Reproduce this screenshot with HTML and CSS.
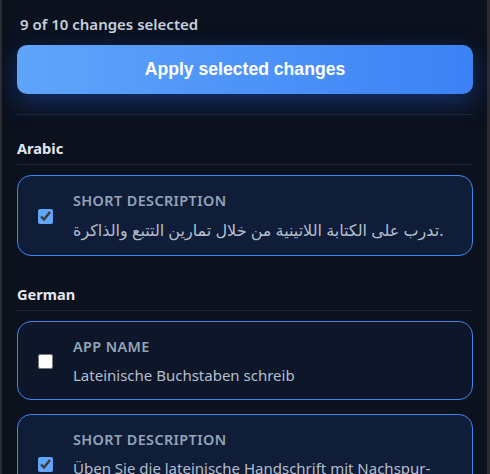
FILE: index.html
```html
<!DOCTYPE html>
<html>
<head>
<meta charset="utf-8">
<link rel="stylesheet" href="styles.css">
</head>
<body>
<div class="panel">
  <div class="count">9 of 10 changes selected</div>
  <button class="apply">Apply selected changes</button>
  <div class="divider"></div>

  <section class="group">
    <h3 class="lang">Arabic</h3>
    <label class="card checked">
      <input type="checkbox" class="check" checked>
      <div class="body">
        <div class="field">Short description</div>
        <div class="value arabic">تدرب على الكتابة اللاتينية من خلال تمارين التتبع والذاكرة.</div>
      </div>
    </label>
  </section>

  <section class="group">
    <h3 class="lang">German</h3>
    <label class="card">
      <input type="checkbox" class="check">
      <div class="body">
        <div class="field">App name</div>
        <div class="value">Lateinische Buchstaben schreib</div>
      </div>
    </label>
    <label class="card checked">
      <input type="checkbox" class="check" checked>
      <div class="body">
        <div class="field">Short description</div>
        <div class="value">Üben Sie die lateinische Handschrift mit Nachspur- und Gedächtnisübungen.</div>
      </div>
    </label>
  </section>
</div>
</body>
</html>
```
FILE: styles.css
```css
html, body {
  margin: 0;
  padding: 0;
  background: #2c2c2e;
  height: 474px;
  overflow: hidden;
}

.panel {
  margin-left: 2px;
  width: 485px;
  box-sizing: border-box;
  padding: 14px 14px 40px 15px;
  background: #0b111d;
  border-radius: 0 0 16px 16px;
  font-family: "Noto Sans", "Open Sans", "DejaVu Sans", sans-serif;
  min-height: 520px;
}

.count {
  font-size: 15px;
  line-height: 20px;
  font-weight: 600;
  color: #c6cfdc;
  padding-left: 3px;
}

.apply {
  display: block;
  width: 100%;
  height: 49px;
  margin-top: 11px;
  border: none;
  border-radius: 10px;
  background: linear-gradient(90deg, #60a5fa 0%, #3b82f6 100%);
  box-shadow: 0 8px 26px rgba(37, 99, 235, 0.38);
  color: #ffffff;
  font-family: "Liberation Sans", Arial, sans-serif;
  font-weight: 700;
  font-size: 17.6px;
  cursor: pointer;
}

.divider {
  height: 1px;
  background: #1c2535;
  margin-top: 20px;
}

.group {
  margin-top: 23px;
}

.group + .group {
  margin-top: 28px;
}

.lang {
  margin: 0;
  font-size: 14.6px;
  line-height: 20px;
  font-weight: 700;
  color: #e2e8f0;
  padding-bottom: 6px;
  border-bottom: 1px solid #1e2736;
  margin-bottom: 10px;
}

.card {
  display: flex;
  align-items: center;
  gap: 20px;
  padding: 16px 18px 14px 20px;
  border: 1px solid #3f86ee;
  border-radius: 14px;
  background: #0d1729;
  margin-bottom: 14px;
}

.card.checked {
  background: #0f1d38;
}

.check {
  flex: none;
  width: 15px;
  height: 15px;
  margin: 0;
  accent-color: #60a5fa;
}

.body {
  flex: 1;
  min-width: 0;
}

.field {
  font-size: 14.4px;
  line-height: 18px;
  font-weight: 600;
  letter-spacing: 0.4px;
  text-transform: uppercase;
  color: #94a3b8;
}

.value {
  margin-top: 9px;
  font-size: 15px;
  line-height: 20px;
  color: #b4bfcd;
}

.value.arabic {
  font-size: 16px;
  line-height: 22px;
}
```
